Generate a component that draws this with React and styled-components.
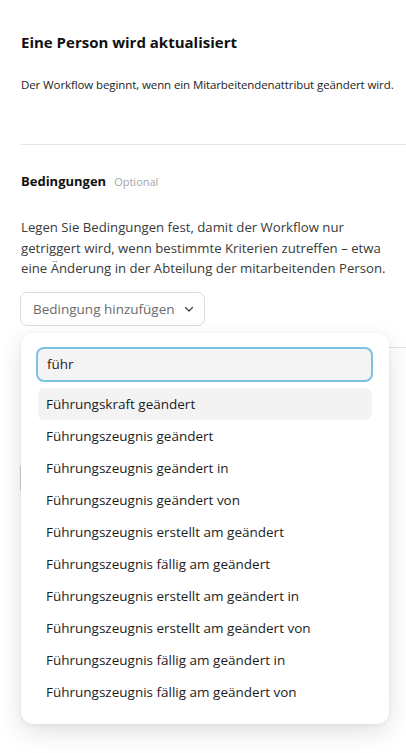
import React, { useState } from "react";
import styled, { createGlobalStyle } from "styled-components";

const GlobalStyle = createGlobalStyle`
  html, body {
    margin: 0;
    padding: 0;
    background: #fff;
  }
  body {
    font-family: "Open Sans", "Noto Sans", sans-serif;
    color: #1c1c1c;
  }
`;

const options = [
  "Führungskraft geändert",
  "Führungszeugnis geändert",
  "Führungszeugnis geändert in",
  "Führungszeugnis geändert von",
  "Führungszeugnis erstellt am geändert",
  "Führungszeugnis fällig am geändert",
  "Führungszeugnis erstellt am geändert in",
  "Führungszeugnis erstellt am geändert von",
  "Führungszeugnis fällig am geändert in",
  "Führungszeugnis fällig am geändert von",
];

function App() {
  const [query, setQuery] = useState("führ");
  const [active, setActive] = useState(0);

  return (
    <Page>
      <GlobalStyle />
      <Header>
        <Title>Eine Person wird aktualisiert</Title>
        <Lead>Der Workflow beginnt, wenn ein Mitarbeitendenattribut geändert wird.</Lead>
      </Header>

      <Section>
        <SectionHead>
          <SectionTitle>Bedingungen</SectionTitle>
          <Hint>Optional</Hint>
        </SectionHead>
        <Body>
          Legen Sie Bedingungen fest, damit der Workflow nur getriggert wird, wenn bestimmte
          Kriterien zutreffen – etwa eine Änderung in der Abteilung der mitarbeitenden Person.
        </Body>

        <AddWrap>
          <AddButton type='button'>
            Bedingung hinzufügen
            <svg width='12' height='12' viewBox='0 0 12 12' fill='none'>
              <path d='M2.5 4.5L6 8l3.5-3.5' stroke='#444' strokeWidth='1.3' strokeLinecap='round' strokeLinejoin='round' />
            </svg>
          </AddButton>

          <Popover>
            <Search
              value={query}
              autoFocus
              onChange={(e) => setQuery(e.target.value)}
            />
            <List>
              {options.map((o, i) => (
                <Option key={o} $active={i === active} onMouseEnter={() => setActive(i)}>
                  {o}
                </Option>
              ))}
            </List>
          </Popover>
        </AddWrap>
      </Section>

      <NextSection>
        <GhostButton />
      </NextSection>
    </Page>
  );
}

const Page = styled.div`
  padding: 0 0 0 21px;
  min-height: 753px;
  box-sizing: border-box;
`;

const Header = styled.header`
  padding: 31px 0 51px;
  border-bottom: 1px solid #e4e4e4;
`;

const Title = styled.h1`
  margin: 0;
  font-size: 15px;
  line-height: 22px;
  font-weight: 700;
  color: #111;
`;

const Lead = styled.p`
  margin: 24px 0 0;
  font-size: 11.5px;
  line-height: 16px;
  color: #1c1c1c;
  letter-spacing: -0.1px;
  white-space: nowrap;
`;

const Section = styled.section`
  padding-top: 26px;
  padding-right: 8px;
  padding-bottom: 21px;
  border-bottom: 1px solid #e4e4e4;
`;

const SectionHead = styled.div`
  display: flex;
  align-items: baseline;
  gap: 8px;
`;

const SectionTitle = styled.h2`
  margin: 0;
  font-size: 13px;
  line-height: 20px;
  font-weight: 700;
  color: #111;
`;

const Hint = styled.span`
  font-size: 11px;
  color: #a5a5a5;
`;

const Body = styled.p`
  margin: 26px 0 0;
  font-size: 13.2px;
  line-height: 20.5px;
  color: #3a3a3a;
`;

const AddWrap = styled.div`
  position: relative;
  margin-top: 13px;
`;

const AddButton = styled.button`
  display: inline-flex;
  align-items: center;
  gap: 8px;
  height: 34px;
  padding: 0 9px 0 12px;
  margin-left: -1px;
  background: #fff;
  border: 1px solid #dcdcdc;
  border-radius: 7px;
  font-family: inherit;
  font-size: 13.5px;
  color: #6b6b6b;
`;

const Popover = styled.div`
  position: absolute;
  top: 41px;
  left: 0;
  width: 368px;
  box-sizing: border-box;
  padding: 14px 16px 16px 15px;
  background: #fff;
  border-radius: 12px;
  box-shadow: 0 8px 24px rgba(0, 0, 0, 0.12), 0 1px 4px rgba(0, 0, 0, 0.06);
  z-index: 10;
`;

const Search = styled.input`
  display: block;
  width: 100%;
  height: 35px;
  box-sizing: border-box;
  padding: 0 9px;
  border: 2px solid #7cc3e3;
  border-radius: 8px;
  background: #f4f4f4;
  font-family: inherit;
  font-size: 13.5px;
  color: #222;
  outline: none;
  caret-color: #222;
`;

const List = styled.ul`
  list-style: none;
  margin: 6px 0 0;
  padding: 0 1px 0 2px;
`;

const Option = styled.li`
  height: 32px;
  display: flex;
  align-items: center;
  padding: 0 8px;
  border-radius: 6px;
  font-size: 13.5px;
  color: #1c1c1c;
  background: ${(p) => (p.$active ? "#f3f3f3" : "transparent")};
  cursor: pointer;
`;

const NextSection = styled.section`
  padding-top: 114px;
`;

const GhostButton = styled.div`
  width: 120px;
  height: 30px;
  margin-left: -1px;
  border: 1px solid #cfcfcf;
  border-radius: 6px;
`;

export default App;
